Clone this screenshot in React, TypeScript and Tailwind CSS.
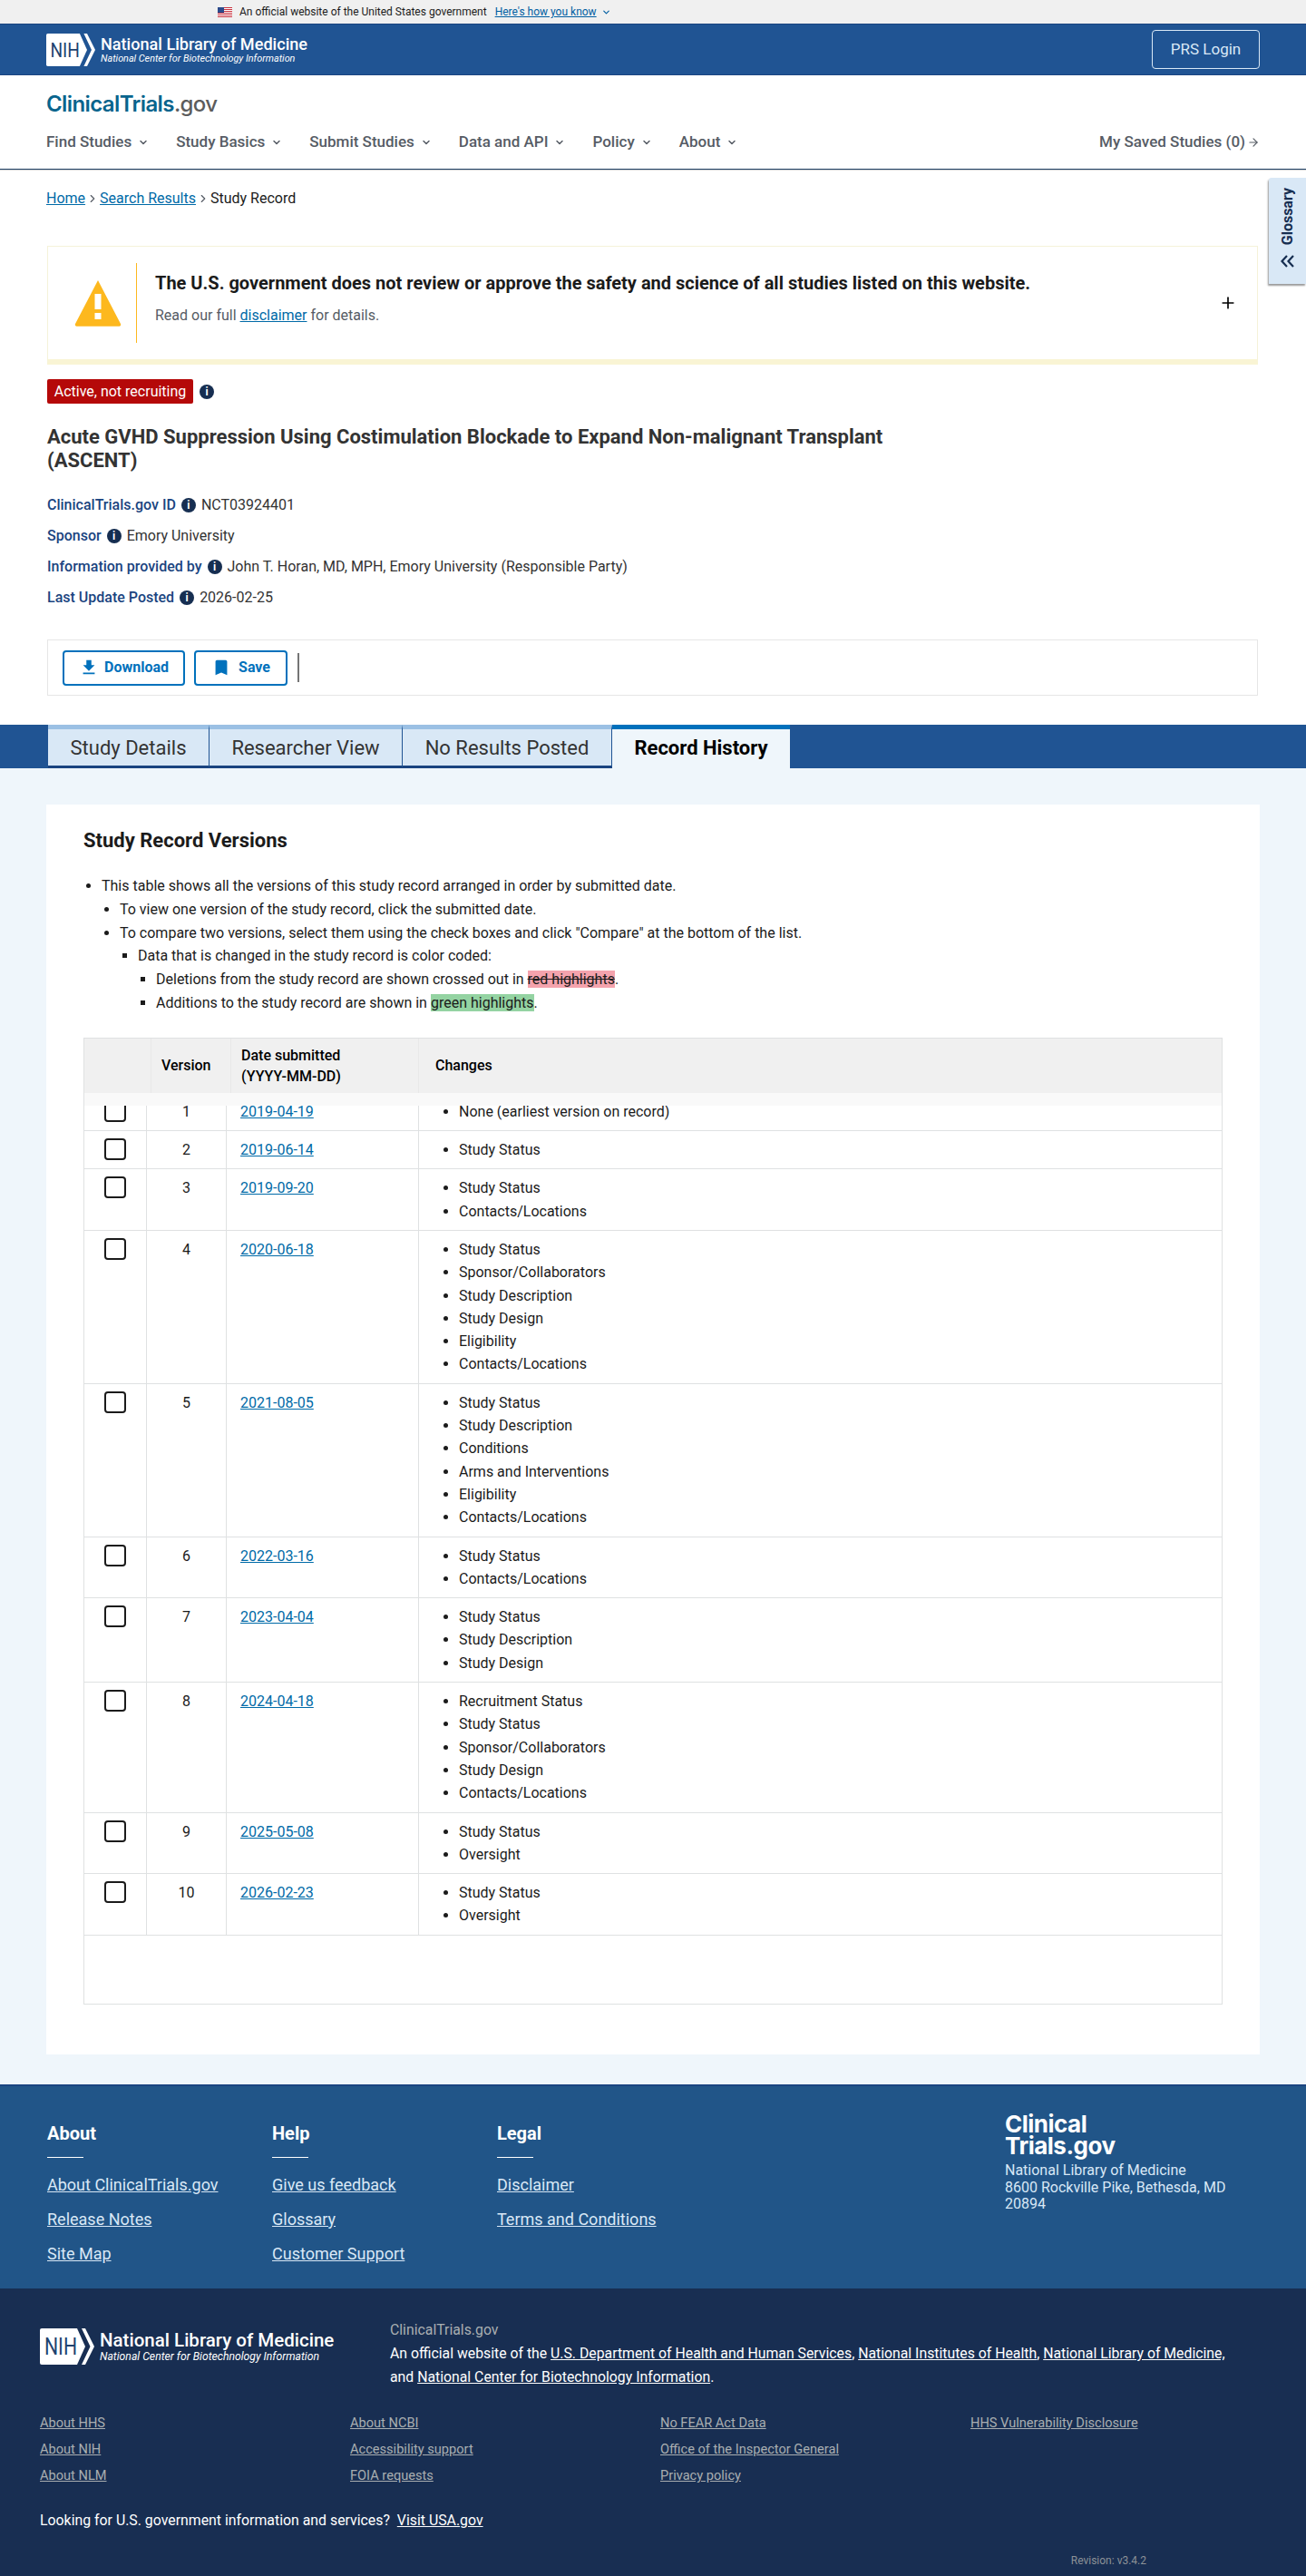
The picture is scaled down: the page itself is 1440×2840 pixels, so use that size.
import { ChevronDown, ChevronRight, ArrowRight, Plus } from "lucide-react";
import { MdFileDownload, MdBookmark } from "react-icons/md";

const rows = [
  { v: 1, date: "2019-04-19", changes: ["None (earliest version on record)"] },
  { v: 2, date: "2019-06-14", changes: ["Study Status"] },
  { v: 3, date: "2019-09-20", changes: ["Study Status", "Contacts/Locations"] },
  {
    v: 4,
    date: "2020-06-18",
    changes: ["Study Status", "Sponsor/Collaborators", "Study Description", "Study Design", "Eligibility", "Contacts/Locations"],
  },
  {
    v: 5,
    date: "2021-08-05",
    changes: ["Study Status", "Study Description", "Conditions", "Arms and Interventions", "Eligibility", "Contacts/Locations"],
  },
  { v: 6, date: "2022-03-16", changes: ["Study Status", "Contacts/Locations"] },
  { v: 7, date: "2023-04-04", changes: ["Study Status", "Study Description", "Study Design"] },
  {
    v: 8,
    date: "2024-04-18",
    changes: ["Recruitment Status", "Study Status", "Sponsor/Collaborators", "Study Design", "Contacts/Locations"],
  },
  { v: 9, date: "2025-05-08", changes: ["Study Status", "Oversight"] },
  { v: 10, date: "2026-02-23", changes: ["Study Status", "Oversight"] },
];

const nav = ["Find Studies", "Study Basics", "Submit Studies", "Data and API", "Policy", "About"];

const footerCols = [
  { title: "About", links: ["About ClinicalTrials.gov", "Release Notes", "Site Map"] },
  { title: "Help", links: ["Give us feedback", "Glossary", "Customer Support"] },
  { title: "Legal", links: ["Disclaimer", "Terms and Conditions"] },
];

const nlmLinks = [
  ["About HHS", "About NIH", "About NLM"],
  ["About NCBI", "Accessibility support", "FOIA requests"],
  ["No FEAR Act Data", "Office of the Inspector General", "Privacy policy"],
  ["HHS Vulnerability Disclosure"],
];

function NihLogo({ big }: { big?: boolean }) {
  return (
    <div className="flex items-center gap-[6px]">
      <svg viewBox="0 0 60 40" className={big ? "h-[40px] w-[60px]" : "h-[36px] w-[54px]"}>
        <path d="M2 0H41L50 20L41 40H2a2 2 0 0 1-2-2V2a2 2 0 0 1 2-2Z" fill="#fff" />
        <path d="M46 0H50L60 20L50 40H46L55.500 20Z" fill="#fff" />
        <text x="5" y="29" fontFamily="Roboto, sans-serif" fontSize="25" fill="#20426f" textLength="36" lengthAdjust="spacingAndGlyphs">
          NIH
        </text>
      </svg>
      <div className="text-white">
        <div className={big ? "text-[20.500px] leading-[22px] font-medium" : "text-[18.100px] leading-[19px] font-medium"}>
          National Library of Medicine
        </div>
        <div className={big ? "text-[12.200px] leading-[15px] italic" : "text-[10.800px] leading-[13px] italic"}>
          National Center for Biotechnology Information
        </div>
      </div>
    </div>
  );
}

function Info() {
  return (
    <span className="inline-flex h-[16px] w-[16px] shrink-0 items-center justify-center rounded-full bg-[#162e51] text-[12px] leading-none font-bold text-white">
      i
    </span>
  );
}

function Meta({ label, value }: { label: string; value: string }) {
  return (
    <div className="flex h-[34px] items-center gap-[6px] text-[16px]">
      <span className="font-medium text-[#1a4480]">{label}</span>
      <Info />
      <span className="text-[#333]">{value}</span>
    </div>
  );
}

function Flag() {
  return (
    <svg viewBox="0 0 16 11" className="h-[11px] w-[16px]">
      <rect width="16" height="11" fill="#fff" />
      <g fill="#c8313e">
        <rect width="16" height="1" />
        <rect y="2" width="16" height="1" />
        <rect y="4" width="16" height="1" />
        <rect y="6" width="16" height="1" />
        <rect y="8" width="16" height="1" />
        <rect y="10" width="16" height="1" />
      </g>
      <rect width="7" height="6" fill="#2b4a8b" />
    </svg>
  );
}

export default function App() {
  return (
    <div className="relative bg-white font-['Roboto',sans-serif] text-[16px] text-[#1b1b1b]">
      {/* gov banner */}
      <div className="flex h-[26px] items-center bg-[#f0f0f0] pl-[240px] text-[12px] text-[#1b1b1b]">
        <Flag />
        <span className="ml-[8px]">An official website of the United States government</span>
        <a className="ml-[9px] text-[#005ea2] underline">Here's how you know</a>
        <ChevronDown className="ml-[5px] h-[11px] w-[11px] text-[#005ea2]" strokeWidth={2.5} />
      </div>

      {/* nih bar */}
      <div className="flex h-[57px] items-center justify-between border-y border-[#1a4480] bg-[#205493] pr-[51px] pl-[51px]">
        <NihLogo />
        <a className="flex h-[43px] w-[119px] items-center justify-center rounded-[4px] border border-[#d9e8f6] text-[17px] text-[#d9e8f6]">
          PRS Login
        </a>
      </div>

      {/* site header */}
      <div className="border-b border-[#1b3c60] px-[51px] pt-[17px] pb-[11px] shadow-[0_1px_1px_rgba(0,0,0,0.15)]">
        <div className="font-['Inter',sans-serif] text-[24px] leading-[29px] font-semibold tracking-[-0.6px] text-[#07648d]">
          ClinicalTrials<span className="font-medium text-[#5c5c5c]">.gov</span>
        </div>
        <div className="mt-[12px] flex h-[34px] items-center justify-between pb-[2px] text-[17px]">
          <div className="flex items-center gap-[30px]">
            {nav.map((n) => (
              <div key={n} className="flex items-center gap-[7px] font-medium text-[#565c65]">
                {n}
                <ChevronDown className="h-[12px] w-[12px]" strokeWidth={3} />
              </div>
            ))}
          </div>
          <div className="flex items-center gap-[2px] font-medium text-[#565c65]">
            My Saved Studies (0)
            <ArrowRight className="h-[14px] w-[14px]" />
          </div>
        </div>
      </div>

      {/* glossary tab */}
      <div className="absolute top-[196px] right-0 flex h-[117px] w-[41px] flex-col items-center justify-end rounded-tl-[3px] bg-[#d9e8f6] pb-[18px] shadow-[-1px_2px_2px_rgba(0,0,0,0.4)]">
        <span className="rotate-180 font-bold text-[#162e51] [writing-mode:vertical-rl]">Glossary</span>
        <svg viewBox="0 0 15 14" className="mt-[11px] h-[14px] w-[15px]" fill="none" stroke="#162e51" strokeWidth="2.2">
          <path d="M7 1 1.500 7 7 13M14 1 8.500 7 14 13" />
        </svg>
      </div>

      {/* breadcrumb */}
      <div className="flex items-center px-[51px] pt-[19px] leading-[25px]">
        <a className="text-[#006aa7] underline">Home</a>
        <ChevronRight className="mx-[1px] h-[14px] w-[14px] text-[#565c65]" />
        <a className="text-[#006aa7] underline">Search Results</a>
        <ChevronRight className="mx-[1px] h-[14px] w-[14px] text-[#565c65]" />
        <span>Study Record</span>
      </div>

      {/* disclaimer */}
      <div className="mx-[52px] mt-[40px] mr-[53px] flex h-[131px] items-center border border-b-[6px] border-[#f5f2d9] border-b-[#f9f4d4] pr-[22px] pl-[29px]">
        <svg viewBox="0 0 52 52" className="h-[52px] w-[52px] shrink-0">
          <path d="M26 1 51 49a1.800 1.800 0 0 1-1.600 2.700H2.600A1.800 1.800 0 0 1 1 49Z" fill="#fdb81e" />
          <rect x="22.500" y="16" width="7" height="17" fill="#fff" />
          <rect x="22.500" y="37" width="7" height="7" fill="#fff" />
        </svg>
        <div className="ml-[16px] h-[88px] w-px shrink-0 bg-[#fdb81e]" />
        <div className="ml-[20px] flex-1 pb-[10px]">
          <div className="text-[20px] leading-[28px] font-bold text-[#1b1b1b]">
            The U.S. government does not review or approve the safety and science of all studies listed on this website.
          </div>
          <div className="mt-[10px] leading-[24px] text-[#565c65]">
            Read our full <a className="text-[#006aa7] underline">disclaimer</a> for details.
          </div>
        </div>
        <Plus className="h-[20px] w-[20px] text-black" />
      </div>

      {/* study header */}
      <div className="mt-[16px] px-[52px]">
        <div className="flex items-center gap-[7px]">
          <span className="flex h-[27px] w-[161px] items-center justify-center rounded-[2px] bg-[#b50909] text-white">
            Active, not recruiting
          </span>
          <Info />
        </div>
        <h1 className="mt-[24px] w-[960px] text-[22px] leading-[25.500px] font-bold text-[#333]">
          Acute GVHD Suppression Using Costimulation Blockade to Expand Non-malignant Transplant (ASCENT)
        </h1>
        <div className="mt-[20px]">
          <Meta label="ClinicalTrials.gov ID" value="NCT03924401" />
          <Meta label="Sponsor" value="Emory University" />
          <Meta label="Information provided by" value="John T. Horan, MD, MPH, Emory University (Responsible Party)" />
          <Meta label="Last Update Posted" value="2026-02-25" />
        </div>
        <div className="mt-[29px] mr-px flex h-[62px] items-center gap-[10px] border border-[#e6e6e6] pl-[16px]">
          <button className="flex h-[39px] w-[135px] items-center justify-center gap-[6px] rounded-[4px] border-2 border-[#0071bc] text-[16px] font-bold text-[#0071bc]">
            <MdFileDownload className="h-[22px] w-[22px]" />
            Download
          </button>
          <button className="flex h-[39px] w-[103px] items-center justify-center gap-[8px] rounded-[4px] border-2 border-[#0071bc] text-[16px] font-bold text-[#0071bc]">
            <MdBookmark className="h-[22px] w-[22px]" />
            Save
          </button>
          <div className="ml-[1px] h-[32px] w-[2px] bg-[#757575]" />
        </div>
      </div>

      {/* tabs */}
      <div className="mt-[32px] flex h-[48px] bg-[#205493] pl-[53px] text-[22px]">
        {[
          ["Study Details", "w-[178px]"],
          ["Researcher View", "w-[213px]"],
          ["No Results Posted", "w-[231px]"],
        ].map(([t, w]) => (
          <div
            key={t}
            className={`flex items-center justify-center border-t-[5px] border-r border-b-[3px] border-t-[#9bc0e4] border-r-[#205493] border-b-[#1a4480] bg-[#d9e8f6] text-[#333] ${w}`}
          >
            {t}
          </div>
        ))}
        <div className="flex w-[196px] items-center justify-center border-t-[5px] border-[#0071bc] bg-[#eff6fb] pb-[3px] font-bold text-black">
          Record History
        </div>
      </div>

      {/* record history */}
      <div className="bg-[#eff6fb] px-[51px] pt-[40px] pb-[33px]">
        <div className="h-[1378px] bg-white px-[41px] pt-[24px]">
          <h2 className="text-[22px] leading-[32px] font-bold text-[#1b1b1b]">Study Record Versions</h2>
          <ul className="mt-[21px] list-disc pl-[20px] leading-[25.800px]">
            <li>
              This table shows all the versions of this study record arranged in order by submitted date.
              <ul className="list-disc pl-[20px]">
                <li>To view one version of the study record, click the submitted date.</li>
                <li>
                  To compare two versions, select them using the check boxes and click "Compare" at the bottom of the list.
                  <ul className="list-[square] pl-[20px]">
                    <li>
                      Data that is changed in the study record is color coded:
                      <ul className="list-[square] pl-[20px]">
                        <li>
                          Deletions from the study record are shown crossed out in{" "}
                          <span className="bg-[#f4a3ad] line-through">red highlights</span>.
                        </li>
                        <li>
                          Additions to the study record are shown in <span className="bg-[#94d3a2]">green highlights</span>.
                        </li>
                      </ul>
                    </li>
                  </ul>
                </li>
              </ul>
            </li>
          </ul>

          {/* versions table */}
          <div className="mt-[25px] h-[1066px] overflow-hidden border border-[#dfe1e2]">
            <div className="flex h-[60px] bg-[#f0f0f0] font-medium text-black">
              <div className="w-[74px] border-r border-[#e8e8e8]" />
              <div className="flex w-[88px] items-center border-r border-[#e8e8e8] pl-[11px]">Version</div>
              <div className="flex w-[207px] items-center border-r border-[#e8e8e8] pl-[11px] leading-[23px]">
                Date submitted
                <br />
                (YYYY-MM-DD)
              </div>
              <div className="flex flex-1 items-center pl-[18px]">Changes</div>
            </div>
            <div className="h-[14px] bg-[#f9f9f9]" />
            <div className="h-[992px] overflow-hidden">
              <div className="-mt-[14px]">
                {rows.map((r) => (
                  <div key={r.v} className="flex border-b border-[#dfe1e2]">
                    <div className="w-[69px] border-r border-[#dfe1e2] pt-[8px] pl-[22px]">
                      <div className="h-[24px] w-[24px] rounded-[4px] border-2 border-[#1b1b1b] bg-white" />
                    </div>
                    <div className="w-[88px] border-r border-[#dfe1e2] py-[8px] text-center leading-[25.300px]">{r.v}</div>
                    <div className="w-[212px] border-r border-[#dfe1e2] py-[8px] pl-[15px] leading-[25.300px]">
                      <a className="text-[#006aa7] underline">{r.date}</a>
                    </div>
                    <ul className="flex-1 list-disc py-[8px] pl-[44px] leading-[25.300px]">
                      {r.changes.map((c) => (
                        <li key={c}>{c}</li>
                      ))}
                    </ul>
                  </div>
                ))}
              </div>
            </div>
          </div>
        </div>
      </div>

      {/* footer top */}
      <div className="flex h-[225px] justify-between border-t-2 border-[#1a4480] bg-[#215588] pr-[52px] pl-[52px]">
        <div className="flex pt-[38px]">
          {footerCols.map((col) => (
            <div key={col.title} className="w-[248px]">
              <div className="text-[20px] leading-[28px] font-bold text-white">{col.title}</div>
              <div className="mt-[12px] h-px w-[40px] bg-white" />
              <div className="mt-[17px] flex flex-col gap-[12px] text-[18px] leading-[26px] text-[#d9e8f6]">
                {col.links.map((l) => (
                  <a key={l} className="underline">
                    {l}
                  </a>
                ))}
              </div>
            </div>
          ))}
        </div>
        <div className="w-[280px] pt-[30px]">
          <div className="font-['Inter',sans-serif] text-[26px] leading-[24px] font-bold tracking-[-0.5px] text-white">
            Clinical
            <br />
            Trials.gov
          </div>
          <div className="mt-[6px] text-[16px] leading-[18.500px] text-[#d9e8f6]">
            National Library of Medicine
            <br />
            8600 Rockville Pike, Bethesda, MD
            <br />
            20894
          </div>
        </div>
      </div>

      {/* footer bottom */}
      <div className="h-[317px] bg-[#182e52] px-[44px] pt-[33px]">
        <div className="flex">
          <div className="w-[386px] pt-[11px]">
            <NihLogo big />
          </div>
          <div className="w-[930px] text-[15.800px] leading-[26px] whitespace-nowrap text-white">
            <div className="text-[#a9aeb1]">ClinicalTrials.gov</div>
            An official website of the <a className="underline">U.S. Department of Health and Human Services</a>,{" "}
            <a className="underline">National Institutes of Health</a>, <a className="underline">National Library of Medicine,</a>
            <br />
            and <a className="underline">National Center for Biotechnology Information</a>.
          </div>
        </div>
        <div className="mt-[26px] flex">
          {nlmLinks.map((col) => (
            <div key={col[0]} className="flex w-[342px] shrink-0 flex-col gap-[7px] text-[14.600px] leading-[22px] text-[#a9aeb1]">
              {col.map((l) => (
                <a key={l} className="underline">
                  {l}
                </a>
              ))}
            </div>
          ))}
        </div>
        <div className="mt-[26px] text-[15.850px] leading-[26px] text-white">
          Looking for U.S. government information and services?&nbsp; <a className="underline">Visit USA.gov</a>
        </div>
        <div className="mt-[24px] pr-[132px] text-right text-[12px] leading-[14px] text-[#8d9297]">Revision: v3.4.2</div>
      </div>
    </div>
  );
}
